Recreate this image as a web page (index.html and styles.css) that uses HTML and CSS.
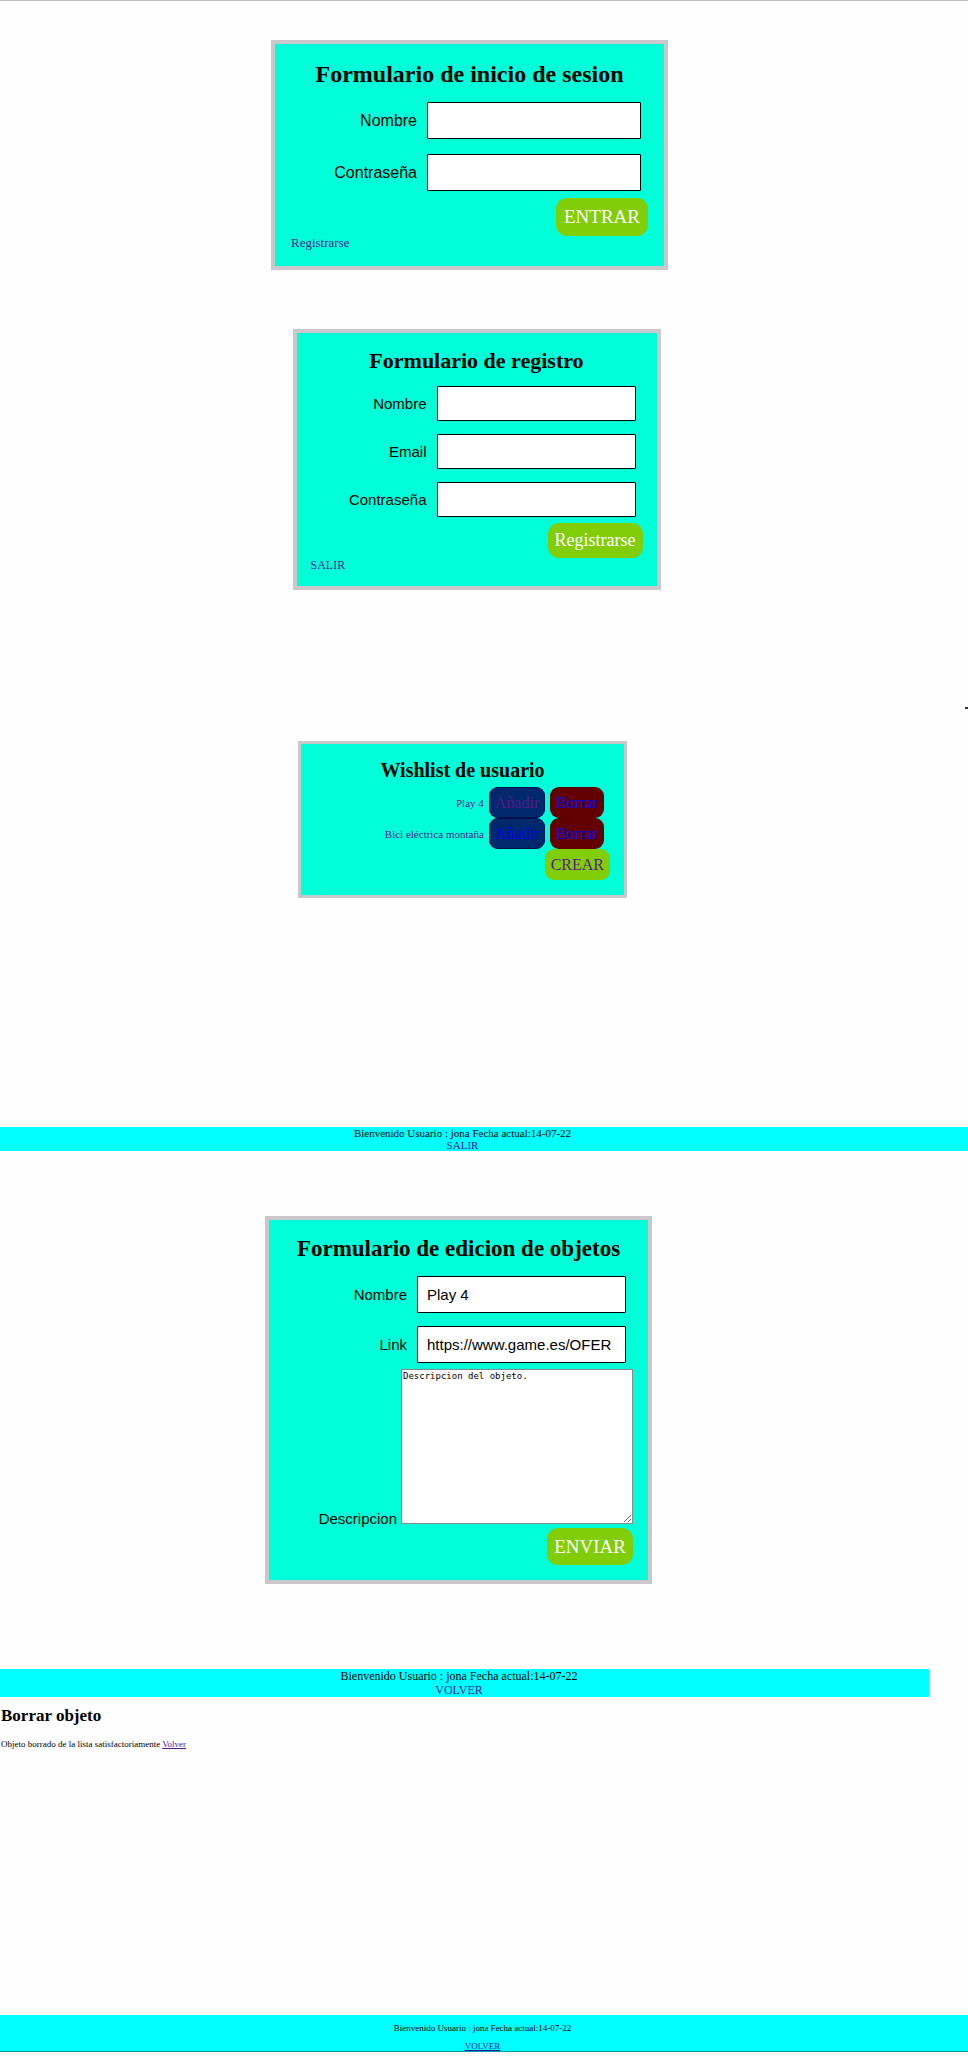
FILE: index.html
```
<!DOCTYPE html>
<html lang="es">
<head>
<meta charset="utf-8">
<title>Wishlist</title>
<link rel="stylesheet" href="styles.css">
</head>
<body>
<section class="screen screen-login">
  <form class="card card-login">
    <h1 class="title">Formulario de inicio de sesion</h1>
    <div class="fields">
      <div class="field"><label for="login-name">Nombre</label><input id="login-name" type="text"></div>
      <div class="field"><label for="login-pass">Contraseña</label><input id="login-pass" type="password"></div>
    </div>
    <button class="button" type="button">ENTRAR</button>
    <a class="link" href="#registro">Registrarse</a>
  </form>
</section>

<section class="screen screen-register" id="registro">
  <form class="card card-register">
    <h1 class="title">Formulario de registro</h1>
    <div class="fields">
      <div class="field"><label for="reg-name">Nombre</label><input id="reg-name" type="text"></div>
      <div class="field"><label for="reg-email">Email</label><input id="reg-email" type="email"></div>
      <div class="field"><label for="reg-pass">Contraseña</label><input id="reg-pass" type="password"></div>
    </div>
    <button class="button" type="button">Registrarse</button>
    <a class="link" href="#salir">SALIR</a>
  </form>
</section>

<section class="screen screen-list">
  <span class="edge-mark"></span>
  <div class="card card-list">
    <h1 class="title">Wishlist de usuario</h1>
    <div class="item"><a class="item-name" href="#play">Play 4</a><a class="button add visited" href="#add1">Añadir</a><a class="button delete" href="#del1">Borrar</a></div>
    <div class="item"><a class="item-name" href="#bici">Bici eléctrica montaña</a><a class="button add" href="#add2">Añadir</a><a class="button delete" href="#del2">Borrar</a></div>
    <a class="button create" href="#crear">CREAR</a>
  </div>
</section>
<footer class="bar bar-list">
  <p>Bienvenido Usuario : jona Fecha actual:14-07-22</p>
  <a href="#salir">SALIR</a>
</footer>

<section class="screen screen-edit">
  <form class="card card-edit">
    <h1 class="title">Formulario de edicion de objetos</h1>
    <div class="fields">
      <div class="field"><label for="obj-name">Nombre</label><input id="obj-name" type="text" value="Play 4"></div>
      <div class="field"><label for="obj-link">Link</label><input id="obj-link" type="text" value="https://www.game.es/OFER"></div>
    </div>
    <div class="description"><label for="obj-desc">Descripcion</label><textarea id="obj-desc">Descripcion del objeto.</textarea></div>
    <button class="button" type="button">ENVIAR</button>
  </form>
</section>
<footer class="bar bar-edit">
  <p>Bienvenido Usuario : jona Fecha actual:14-07-22</p>
  <a href="#volver">VOLVER</a>
</footer>

<section class="message">
  <h1>Borrar objeto</h1>
  <p>Objeto borrado de la lista satisfactoriamente <a href="#volver">Volver</a></p>
</section>
<footer class="bar bar-message">
  <p>Bienvenido Usuario : jona Fecha actual:14-07-22</p>
  <a href="#volver">VOLVER</a>
</footer>
</body>
</html>
```
FILE: styles.css
```
* { box-sizing: border-box; }

body {
  margin: 0;
  border-top: 1px solid #bdbdbd;
  background: #fefefe;
  color: #000;
  font-family: "Liberation Serif", "Times New Roman", serif;
}

h1, p { margin: 0; }

.screen {
  display: flex;
  justify-content: center;
}

.screen-login { padding: 39px 29px 59px 0; }
.screen-register { padding: 0 15px 151px 0; }
.screen-list { position: relative; padding: 0 43px 229px 0; }
.screen-edit { padding: 65px 51px 85px 0; }

.card {
  display: flex;
  flex-direction: column;
  align-items: flex-end;
  border: 4px solid #cbc8cb;
  background: #00ffd8;
}

.card-login { width: 397px; padding: 16px; font-size: 16px; }
.card-register { width: 368px; padding: 15px 14px 14px; font-size: 15px; }
.card-list { width: 329px; padding: 14px 14px 15px; border-width: 3px; font-size: 11px; }
.card-edit { width: 387px; padding: 15px; font-size: 15px; }

.title {
  align-self: stretch;
  text-align: center;
  font-weight: bold;
}

.card-login .title { margin-bottom: 14px; font-size: 24px; line-height: 28px; }
.card-register .title { margin-bottom: 12px; font-size: 22px; line-height: 26px; }
.card-list .title { margin-bottom: 5px; font-size: 20px; line-height: 24px; }
.card-edit .title { margin-bottom: 13px; font-size: 23px; line-height: 28px; }

.fields {
  display: flex;
  flex-direction: column;
  align-items: flex-end;
  gap: 13px;
  margin: 0 7px 6px 0;
}

.card-login .fields { gap: 15px; margin-bottom: 7px; }

.field {
  display: flex;
  align-items: center;
  gap: 10px;
}

.field label, .description label, .field input {
  font-family: "Liberation Sans", Arial, sans-serif;
}

.field input {
  width: 214px;
  height: 37px;
  padding: 0 9px;
  border: 1px solid #000;
  border-radius: 1px;
  background: #fff;
  color: #000;
  font-size: inherit;
}

.card-register .field input { width: 199px; height: 35px; }
.card-edit .field input { width: 209px; }

.button {
  padding: 0 8px;
  border: 0;
  border-radius: 11px;
  background: #80cd08;
  color: #fff;
  font-family: inherit;
  font-size: 19px;
  line-height: 38px;
  text-decoration: none;
}

.card-register .button { padding: 0 7px; font-size: 18px; line-height: 35px; }
.card-edit .button { padding: 0 7px; line-height: 37px; }

.link {
  align-self: flex-start;
  color: #551a8b;
  font-size: 13px;
  line-height: 14px;
  text-decoration: none;
}

.card-register .link { font-size: 12px; }

.item {
  display: flex;
  align-items: center;
  gap: 5px;
  margin-right: 6px;
}

.item-name {
  color: #551a8b;
  text-decoration: none;
}

.card-list .button {
  padding: 0 6px;
  border-radius: 9px;
  font-size: 16px;
  line-height: 31px;
}

.card-list .add {
  background: #00286c;
  box-shadow: inset 0 0 0 1px #00104f;
  color: #0000ee;
}

.card-list .visited, .card-list .create { color: #551a8b; }
.card-list .delete { background: #620000; color: #0000ee; }

/* corner of the neighbouring window at the right edge */
.edge-mark {
  position: absolute;
  top: -34px;
  right: 0;
  width: 3px;
  height: 26px;
  border-top: 2px solid #333;
}

.description {
  display: flex;
  align-items: flex-end;
  gap: 4px;
  margin-bottom: 4px;
}

.description label { line-height: 11px; }

.description textarea {
  width: 232px;
  height: 155px;
  padding: 1px;
  border: 1px solid #8a8a8a;
  background: #fff;
  color: #000;
  font-family: "DejaVu Sans Mono", monospace;
  font-size: 9px;
  resize: both;
}

.bar {
  background: #00ffff;
  text-align: center;
}

.bar a { display: block; color: #2a1a9b; text-decoration: none; }
.bar-list { padding-right: 43px; font-size: 11px; line-height: 12px; }
.bar-edit { margin-right: 39px; padding-right: 11px; font-size: 12px; line-height: 14px; }

.message { padding: 9px 1px 266px; font-size: 9px; }
.message h1 { margin-bottom: 13px; font-size: 17px; line-height: 20px; }
.message p { line-height: 10px; }
.message a { color: #551a8b; }

.bar-message {
  padding: 9px 3px 0 0;
  border-bottom: 1px solid #00a0a8;
  font-size: 9px;
  line-height: 9px;
}

.bar-message a { margin-top: 9px; text-decoration: underline; }
```
